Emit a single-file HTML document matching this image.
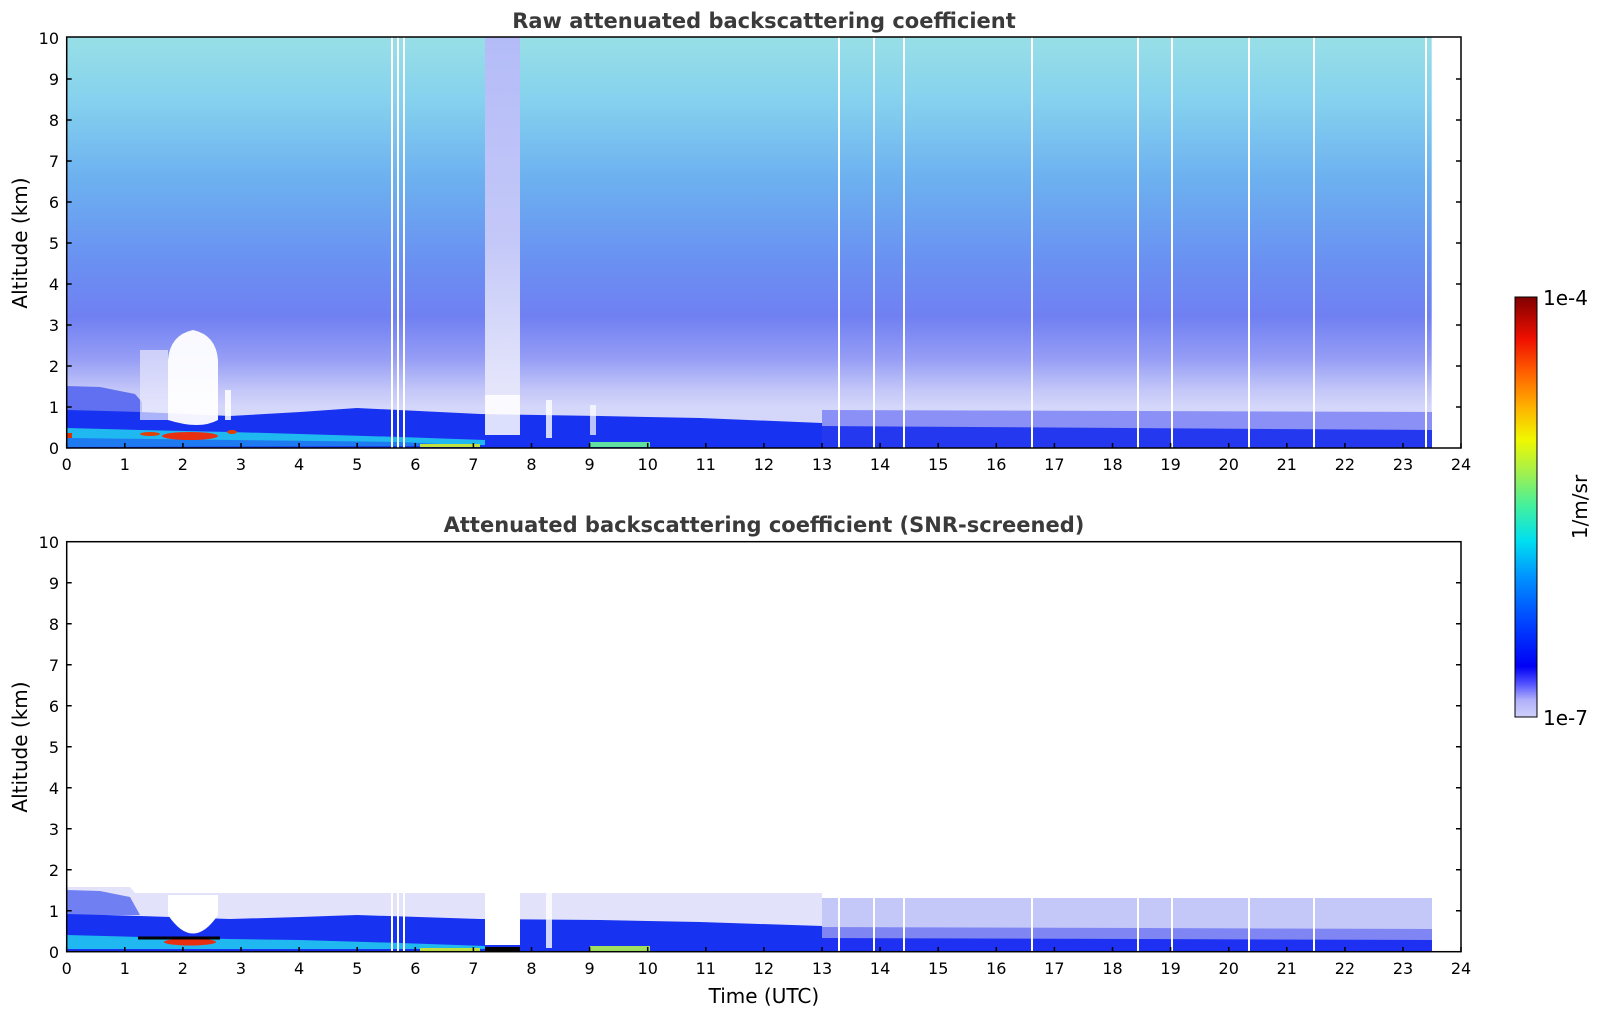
<!DOCTYPE html>
<html><head><meta charset="utf-8"><style>
html,body{margin:0;padding:0;background:#fff;width:1606px;height:1020px;overflow:hidden}
svg{display:block}
text{font-family:"DejaVu Sans","Liberation Sans",sans-serif;fill:#000}
</style></head><body>
<svg width="1606" height="1020" viewBox="0 0 1606 1020" xmlns="http://www.w3.org/2000/svg">
<defs>
<linearGradient id="tg" x1="0" y1="37" x2="0" y2="448" gradientUnits="userSpaceOnUse">
<stop offset="0" stop-color="#98dfe6"/>
<stop offset="0.15" stop-color="#86d2ee"/>
<stop offset="0.35" stop-color="#6cb0f0"/>
<stop offset="0.55" stop-color="#6a90f2"/>
<stop offset="0.68" stop-color="#7080f2"/>
<stop offset="0.78" stop-color="#949cf5"/>
<stop offset="0.86" stop-color="#c4c7f8"/>
<stop offset="0.9" stop-color="#d4d6fa"/>
<stop offset="1" stop-color="#d4d6fa"/>
</linearGradient>
<linearGradient id="cb" x1="0" y1="717" x2="0" y2="297" gradientUnits="userSpaceOnUse">
<stop offset="0" stop-color="#d0d0fb"/>
<stop offset="0.04" stop-color="#b0b0fb"/>
<stop offset="0.08" stop-color="#5050ff"/>
<stop offset="0.12" stop-color="#0000f5"/>
<stop offset="0.22" stop-color="#0040ff"/>
<stop offset="0.33" stop-color="#0090ff"/>
<stop offset="0.42" stop-color="#00e0f0"/>
<stop offset="0.5" stop-color="#40f0a0"/>
<stop offset="0.58" stop-color="#a0f050"/>
<stop offset="0.66" stop-color="#f0f800"/>
<stop offset="0.74" stop-color="#ffb000"/>
<stop offset="0.82" stop-color="#ff6000"/>
<stop offset="0.9" stop-color="#f01000"/>
<stop offset="1" stop-color="#800000"/>
</linearGradient>
<linearGradient id="col" x1="0" y1="37" x2="0" y2="448" gradientUnits="userSpaceOnUse">
<stop offset="0" stop-color="#b4bcf8"/>
<stop offset="0.5" stop-color="#c4c8f8"/>
<stop offset="0.85" stop-color="#e4e5fb"/>
</linearGradient>
</defs>

<!-- TOP PLOT -->
<rect x="66.7" y="37" width="1365" height="411" fill="url(#tg)"/>
<rect x="485" y="37" width="35" height="400" fill="url(#col)"/>
<polygon points="67,386 100,387 135,394 142,402 142,415 67,415" fill="#6070f0"/>
<polygon points="67,410 140,412 230,416 300,412 357,408 480,414 600,416 700,418 822,423 822,448 67,448" fill="#1832f2"/>
<polygon points="822,410 1432,412 1432,432 822,430" fill="#8a90f5"/>
<polygon points="822,426 1432,430 1432,448 822,448" fill="#2438f0"/>
<polygon points="67,428 140,430 230,432 300,434 400,437 485,440 485,445 67,445" fill="#20b8f0"/>
<polygon points="67,438 400,442 485,446 67,447" fill="#1e7af0"/>
<rect x="67" y="433" width="5" height="5" fill="#e03000"/>
<ellipse cx="190" cy="436" rx="28" ry="4" fill="#e83010"/>
<ellipse cx="150" cy="434" rx="10" ry="2" fill="#e04000"/>
<ellipse cx="232" cy="432" rx="5" ry="2" fill="#e04000"/>
<path d="M168,420 L168,360 Q170,335 193,330 Q216,335 218,360 L218,420 Q200,430 168,420Z" fill="#fff" opacity="0.95"/>
<rect x="140" y="350" width="28" height="70" fill="#e8e8fc" opacity="0.7"/>
<rect x="225" y="390" width="6" height="30" fill="#fff" opacity="0.85"/>
<rect x="485" y="395" width="35" height="40" fill="#fff" opacity="0.85"/>
<rect x="546" y="400" width="6" height="38" fill="#fff" opacity="0.8"/>
<rect x="590" y="405" width="6" height="30" fill="#fff" opacity="0.7"/>
<rect x="420" y="444" width="60" height="3" fill="#c0e040"/>
<rect x="590" y="442" width="60" height="5" fill="#60e0a0"/>
<rect x="1433" y="37" width="28" height="411" fill="#fff"/>
<g fill="#fff">
<rect x="391" y="37" width="2" height="411"/><rect x="397" y="37" width="2" height="411"/><rect x="403" y="37" width="2" height="411"/>
<rect x="838" y="37" width="2" height="411"/><rect x="873" y="37" width="2" height="411"/><rect x="903" y="37" width="2" height="411"/>
<rect x="1031" y="37" width="2" height="411"/><rect x="1137" y="37" width="2" height="411"/><rect x="1171" y="37" width="2" height="411"/>
<rect x="1248" y="37" width="2" height="411"/><rect x="1313" y="37" width="2" height="411"/><rect x="1425" y="37" width="2" height="411"/>
</g>

<!-- BOTTOM PLOT -->
<polygon points="67,887 130,887 135,893 822,893 822,898 1432,898 1432,952 67,952" fill="#e2e2fa"/>
<polygon points="822,898 1432,898 1432,952 822,952" fill="#c4c8f8"/>
<polygon points="67,890 100,891 130,897 140,915 67,915" fill="#7080f2"/>
<polygon points="67,914 140,916 230,919 300,917 357,915 480,919 600,920 700,922 822,926 822,952 67,952" fill="#1832f2"/>
<polygon points="822,927 1432,929 1432,952 822,952" fill="#7f86f4"/>
<polygon points="822,938 1432,940 1432,952 822,952" fill="#1e30f2"/>
<polygon points="67,935 140,937 230,939 300,940 400,943 485,946 485,949 67,949" fill="#20b8f0"/>
<ellipse cx="190" cy="942" rx="26" ry="3.5" fill="#e83010"/>
<path d="M138,938 L220,938" stroke="#000" stroke-width="3"/>
<rect x="485" y="947" width="35" height="4" fill="#000"/>
<path d="M168,895 L168,915 Q193,952 218,915 L218,895Z" fill="#fff"/>
<path d="M485,893 L485,945 L520,945 L520,893Z" fill="#fff"/>
<rect x="546" y="893" width="6" height="55" fill="#fff" opacity="0.8"/>
<rect x="420" y="948" width="60" height="3" fill="#c0e040"/>
<rect x="590" y="946" width="60" height="5" fill="#a0e060"/>
<rect x="1433" y="541" width="28" height="411" fill="#fff"/>
<g fill="#fff">
<rect x="391" y="890" width="2" height="62"/><rect x="397" y="890" width="2" height="62"/><rect x="403" y="890" width="2" height="62"/>
<rect x="838" y="890" width="2" height="62"/><rect x="873" y="890" width="2" height="62"/><rect x="903" y="890" width="2" height="62"/>
<rect x="1031" y="890" width="2" height="62"/><rect x="1137" y="890" width="2" height="62"/><rect x="1171" y="890" width="2" height="62"/>
<rect x="1248" y="890" width="2" height="62"/><rect x="1313" y="890" width="2" height="62"/>
</g>

<g fill="none" stroke="#000" stroke-width="1.5">
<rect x="66.7" y="37" width="1394.3" height="411"/>
<rect x="66.7" y="541.7" width="1394.3" height="410"/>
<path d="
M66.7,448v-5 M124.8,448v-5 M182.9,448v-5 M241,448v-5 M299.1,448v-5 M357.2,448v-5 M415.3,448v-5 M473.4,448v-5 M531.5,448v-5 M589.6,448v-5 M647.7,448v-5 M705.8,448v-5 M763.9,448v-5 M822,448v-5 M880.1,448v-5 M938.2,448v-5 M996.3,448v-5 M1054.4,448v-5 M1112.5,448v-5 M1170.6,448v-5 M1228.7,448v-5 M1286.8,448v-5 M1344.9,448v-5 M1403,448v-5 M1461,448v-5
M66.7,952v-5 M124.8,952v-5 M182.9,952v-5 M241,952v-5 M299.1,952v-5 M357.2,952v-5 M415.3,952v-5 M473.4,952v-5 M531.5,952v-5 M589.6,952v-5 M647.7,952v-5 M705.8,952v-5 M763.9,952v-5 M822,952v-5 M880.1,952v-5 M938.2,952v-5 M996.3,952v-5 M1054.4,952v-5 M1112.5,952v-5 M1170.6,952v-5 M1228.7,952v-5 M1286.8,952v-5 M1344.9,952v-5 M1403,952v-5 M1461,952v-5
M66.7,407h5 M66.7,366h5 M66.7,325h5 M66.7,284h5 M66.7,243h5 M66.7,202h5 M66.7,161h5 M66.7,120h5 M66.7,79h5
M1461,407h-5 M1461,366h-5 M1461,325h-5 M1461,284h-5 M1461,243h-5 M1461,202h-5 M1461,161h-5 M1461,120h-5 M1461,79h-5
M66.7,910.7h5 M66.7,869.7h5 M66.7,828.7h5 M66.7,787.7h5 M66.7,746.7h5 M66.7,705.7h5 M66.7,664.7h5 M66.7,623.7h5 M66.7,582.7h5
M1461,910.7h-5 M1461,869.7h-5 M1461,828.7h-5 M1461,787.7h-5 M1461,746.7h-5 M1461,705.7h-5 M1461,664.7h-5 M1461,623.7h-5 M1461,582.7h-5"/>
</g>

<text x="764" y="28" font-size="21" font-weight="bold" text-anchor="middle" style="fill:#3a3a3a">Raw attenuated backscattering coefficient</text>
<text x="764" y="532" font-size="21" font-weight="bold" text-anchor="middle" style="fill:#3a3a3a">Attenuated backscattering coefficient (SNR-screened)</text>

<g font-size="16" text-anchor="end">
<text x="59" y="454">0</text><text x="59" y="413">1</text><text x="59" y="372">2</text><text x="59" y="331">3</text><text x="59" y="290">4</text><text x="59" y="249">5</text><text x="59" y="208">6</text><text x="59" y="167">7</text><text x="59" y="126">8</text><text x="59" y="85">9</text><text x="59" y="44">10</text>
<text x="59" y="958">0</text><text x="59" y="917">1</text><text x="59" y="876">2</text><text x="59" y="835">3</text><text x="59" y="794">4</text><text x="59" y="753">5</text><text x="59" y="712">6</text><text x="59" y="671">7</text><text x="59" y="630">8</text><text x="59" y="589">9</text><text x="59" y="548">10</text>
</g>
<g font-size="16" text-anchor="middle">
<text x="66.7" y="470">0</text><text x="124.8" y="470">1</text><text x="182.9" y="470">2</text><text x="241" y="470">3</text><text x="299.1" y="470">4</text><text x="357.2" y="470">5</text><text x="415.3" y="470">6</text><text x="473.4" y="470">7</text><text x="531.5" y="470">8</text><text x="589.6" y="470">9</text><text x="647.7" y="470">10</text><text x="705.8" y="470">11</text><text x="763.9" y="470">12</text><text x="822" y="470">13</text><text x="880.1" y="470">14</text><text x="938.2" y="470">15</text><text x="996.3" y="470">16</text><text x="1054.4" y="470">17</text><text x="1112.5" y="470">18</text><text x="1170.6" y="470">19</text><text x="1228.7" y="470">20</text><text x="1286.8" y="470">21</text><text x="1344.9" y="470">22</text><text x="1403" y="470">23</text><text x="1461" y="470">24</text>
<text x="66.7" y="974">0</text><text x="124.8" y="974">1</text><text x="182.9" y="974">2</text><text x="241" y="974">3</text><text x="299.1" y="974">4</text><text x="357.2" y="974">5</text><text x="415.3" y="974">6</text><text x="473.4" y="974">7</text><text x="531.5" y="974">8</text><text x="589.6" y="974">9</text><text x="647.7" y="974">10</text><text x="705.8" y="974">11</text><text x="763.9" y="974">12</text><text x="822" y="974">13</text><text x="880.1" y="974">14</text><text x="938.2" y="974">15</text><text x="996.3" y="974">16</text><text x="1054.4" y="974">17</text><text x="1112.5" y="974">18</text><text x="1170.6" y="974">19</text><text x="1228.7" y="974">20</text><text x="1286.8" y="974">21</text><text x="1344.9" y="974">22</text><text x="1403" y="974">23</text><text x="1461" y="974">24</text>
</g>
<text transform="translate(27,243) rotate(-90)" font-size="20" text-anchor="middle">Altitude (km)</text>
<text transform="translate(27,747) rotate(-90)" font-size="20" text-anchor="middle">Altitude (km)</text>
<text x="763.9" y="1003" font-size="20" text-anchor="middle">Time (UTC)</text>

<rect x="1515" y="297" width="22" height="420" fill="url(#cb)" stroke="#000" stroke-width="1"/>
<text x="1543" y="305" font-size="20">1e-4</text>
<text x="1543" y="725" font-size="20">1e-7</text>
<text transform="translate(1587,507) rotate(-90)" font-size="20" text-anchor="middle">1/m/sr</text>
</svg>
</body></html>
